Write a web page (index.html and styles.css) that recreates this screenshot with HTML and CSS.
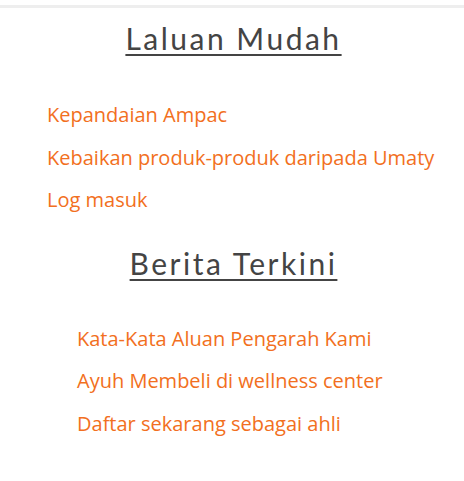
FILE: index.html
```html
<!DOCTYPE html>
<html>
<head>
<meta charset="utf-8">
<link rel="stylesheet" href="styles.css">
</head>
<body>
<div class="topline"></div>
<section class="widget">
  <h2 class="title"><a href="#">Laluan Mudah</a></h2>
  <ul class="links">
    <li><a href="#">Kepandaian Ampac</a></li>
    <li><a href="#">Kebaikan produk-produk daripada Umaty</a></li>
    <li><a href="#">Log masuk</a></li>
  </ul>
</section>
<section class="widget news">
  <h2 class="title"><a href="#">Berita Terkini</a></h2>
  <ul class="links">
    <li><a href="#">Kata-Kata Aluan Pengarah Kami</a></li>
    <li><a href="#">Ayuh Membeli di wellness center</a></li>
    <li><a href="#">Daftar sekarang sebagai ahli</a></li>
  </ul>
</section>
</body>
</html>
```
FILE: styles.css
```css
html, body { margin: 0; padding: 0; background: #fff; }
body { font-family: "Open Sans", sans-serif; }
.topline { height: 3px; background: #eeeeee; margin-top: 5px; }
.widget { display: flex; flex-direction: column; }
.title {
  margin: 0;
  text-align: center;
  font-family: Lato, "Open Sans", sans-serif;
  font-weight: 400;
  font-size: 30px;
  line-height: 36px;
  letter-spacing: 2.5px;
  padding: 12px 0 0 3px;
}
.news .title { padding-top: 23px; }
.title a { color: #444444; text-decoration: underline; text-underline-offset: 4px; text-decoration-thickness: 2px; }
.links { list-style: none; margin: 0; padding: 38px 0 0 47px; display: flex; flex-direction: column; }
.links li { font-size: 20px; line-height: 42.5px; }
.links a { color: #f26f21; text-decoration: none; }
.news .links { padding: 37px 0 0 77px; }
```
